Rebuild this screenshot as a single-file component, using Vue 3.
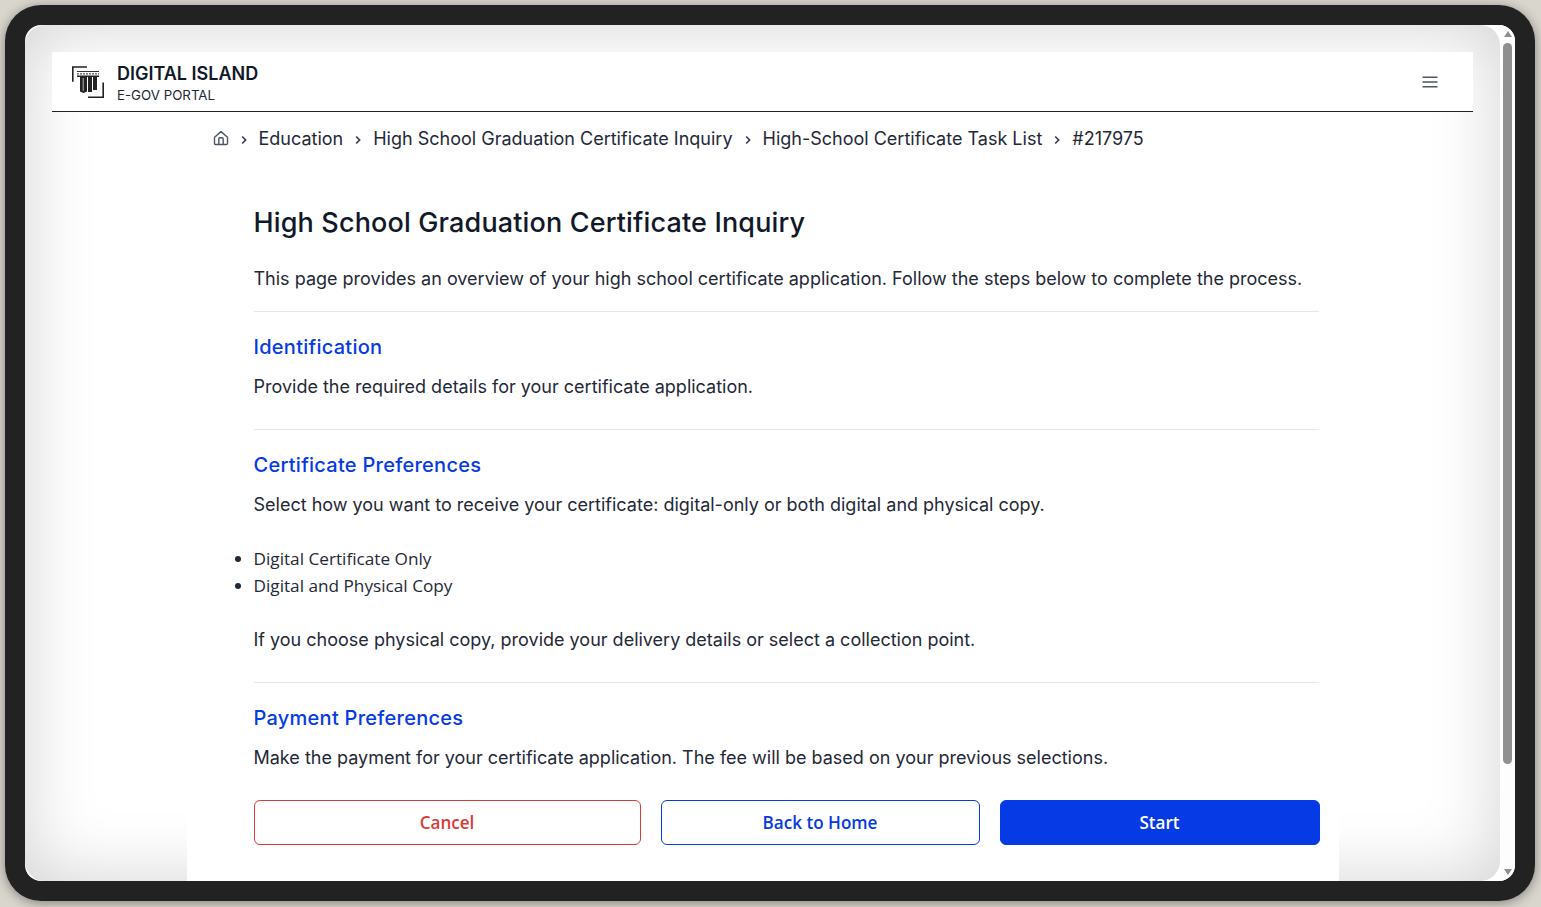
<script setup>
const crumbs = [
  'Education',
  'High School Graduation Certificate Inquiry',
  'High-School Certificate Task List',
  '#217975',
];
</script>

<template>
  <div class="desk">
    <div class="frame">
      <div class="screen">
        <div class="page">
          <header class="topbar">
            <div class="brand">
              <svg class="logo" width="32" height="32" viewBox="0 0 32 32" fill="none">
                <path d="M0.8 15.7V1H15" stroke="#222" stroke-width="1.6" />
                <path d="M31.2 16.5V31.2H16" stroke="#222" stroke-width="1.6" />
                <path d="M5 5.5H27" stroke="#333" stroke-width="1" />
                <path d="M5 7.8H27" stroke="#555" stroke-width="1.2" stroke-dasharray="2 1" />
                <path d="M5 10.2H27" stroke="#222" stroke-width="1.4" />
                <path d="M8 11H15V25.5L11.5 27L8 25.5Z" fill="#222" />
                <path d="M10.6 12H12V25H10.6Z" fill="#888" />
                <path d="M16 11H20V26H16Z" fill="#222" />
                <path d="M21 11H25V24H21Z" fill="#222" />
              </svg>
              <div class="brand-text">
                <div class="brand-name">DIGITAL ISLAND</div>
                <div class="brand-sub">E-GOV PORTAL</div>
              </div>
            </div>
            <svg class="burger" width="16" height="12" viewBox="0 0 16 12">
              <path d="M0.5 1.2H15.5M0.5 6H15.5M0.5 10.8H15.5" stroke="#4b5563" stroke-width="1.6" />
            </svg>
          </header>

          <main class="content">
            <nav class="crumbs">
              <svg class="home" width="16" height="16" viewBox="0 0 16 16" fill="none" stroke="#4b5563" stroke-width="1.4">
                <path d="M1.5 7.2L8 1.6L14.5 7.2V13.2C14.5 14 14 14.5 13.2 14.5H2.8C2 14.5 1.5 14 1.5 13.2Z" stroke-linejoin="round" />
                <path d="M5.8 14.5V9C5.8 8.3 6.3 7.8 7 7.8H9C9.7 7.8 10.2 8.3 10.2 9V14.5" />
              </svg>
              <template v-for="crumb in crumbs" :key="crumb">
                <svg class="chev" width="6" height="10" viewBox="0 0 6 10" fill="none">
                  <path d="M1.2 1.5L4.6 5L1.2 8.5" stroke="#374151" stroke-width="1.7" />
                </svg>
                <span>{{ crumb }}</span>
              </template>
            </nav>

            <div class="body">
              <h1>High School Graduation Certificate Inquiry</h1>
              <p class="intro">This page provides an overview of your high school certificate application. Follow the steps below to complete the process.</p>

              <section class="step">
                <h2>Identification</h2>
                <p>Provide the required details for your certificate application.</p>
              </section>

              <section class="step">
                <h2>Certificate Preferences</h2>
                <p>Select how you want to receive your certificate: digital-only or both digital and physical copy.</p>
                <ul>
                  <li>Digital Certificate Only</li>
                  <li>Digital and Physical Copy</li>
                </ul>
                <p>If you choose physical copy, provide your delivery details or select a collection point.</p>
              </section>

              <section class="step last">
                <h2>Payment Preferences</h2>
                <p>Make the payment for your certificate application. The fee will be based on your previous selections.</p>
              </section>

              <div class="actions">
                <button class="btn cancel">Cancel</button>
                <button class="btn home-btn">Back to Home</button>
                <button class="btn start">Start</button>
              </div>
            </div>
          </main>
        </div>

        <div class="scrollbar">
          <div class="arrow up"></div>
          <div class="track"><div class="thumb"></div></div>
          <div class="arrow down"></div>
        </div>
      </div>
    </div>
  </div>
</template>

<style>
html, body {
  margin: 0;
  background: #d9d6ce;
}
</style>

<style scoped>
.desk {
  width: 1541px;
  height: 907px;
  box-sizing: border-box;
  padding: 5px 6px 6px 5px;
  overflow: hidden;
  background: #d9d6ce;
  font-family: Inter, "Liberation Sans", sans-serif;
  color: #1f2937;
}

.frame {
  height: 100%;
  box-sizing: border-box;
  padding: 20px;
  border-radius: 36px;
  background: #222;
  box-shadow: 0 2px 12px rgba(0, 0, 0, 0.4);
}

.screen {
  height: 100%;
  display: flex;
  overflow: hidden;
  border-radius: 16px;
  background: #fff;
}

.page {
  flex: 1;
  min-width: 0;
  box-sizing: border-box;
  padding: 27px 27px 0;
  border-radius: 20px;
  background: #fff;
  box-shadow: inset 0 0 70px rgba(0, 0, 0, 0.18);
  overflow: hidden;
}

.topbar {
  height: 59px;
  display: flex;
  align-items: center;
  justify-content: space-between;
  padding: 0 35px 0 20px;
  background: #fff;
  border-bottom: 1px solid #222;
}

.brand {
  display: flex;
  align-items: center;
  gap: 13px;
}

.brand-text {
  margin-top: 4px;
}

.brand-name {
  font-size: 18px;
  line-height: 22px;
  font-weight: 600;
  color: #111827;
}

.brand-sub {
  margin-top: 1px;
  font-size: 13.3px;
  line-height: 18px;
  color: #1f2937;
}

.content {
  width: 1152px;
  margin: 0 auto;
  padding-bottom: 60px;
  background: #fff;
}

.crumbs {
  display: flex;
  align-items: center;
  gap: 12px;
  height: 52px;
  padding-left: 26px;
  font-size: 18px;
  color: #1f2937;
}

.chev {
  margin-top: 3px;
}

.body {
  padding: 38px 20px 0 67px;
}

h1 {
  margin: 0;
  font-size: 27px;
  line-height: 42px;
  font-weight: 500;
  letter-spacing: 0.15px;
  color: #111827;
}

p {
  margin: 0;
  font-size: 18px;
  line-height: 27px;
  color: #1f2937;
}

.intro {
  margin-top: 21px;
  padding-bottom: 19px;
  border-bottom: 1px solid #e5e7eb;
}

.step {
  padding: 20px 0 29px;
  border-bottom: 1px solid #e5e7eb;
}

.step.last {
  padding-bottom: 0;
  border-bottom: none;
}

h2 {
  margin: 0 0 11px;
  font-size: 20px;
  line-height: 30px;
  font-weight: 500;
  letter-spacing: 0.26px;
  color: #063ae4;
}

ul {
  margin: 27px 0;
  padding: 0;
  list-style: disc;
  font-family: "Open Sans", "Noto Sans", sans-serif;
  font-size: 17.2px;
  line-height: 27px;
  color: #1f2937;
}

.actions {
  display: grid;
  grid-template-columns: 387px 319px 320px;
  gap: 20px;
  margin-top: 29px;
}

.btn {
  height: 45px;
  border-radius: 6px;
  border: 1px solid;
  background: #fff;
  font-family: "Open Sans", "Noto Sans", sans-serif;
  font-size: 17.1px;
  font-weight: 600;
}

.cancel {
  border-color: #dc3a3a;
  color: #dc3a3a;
}

.home-btn {
  border-color: #063ae4;
  color: #063ae4;
}

.start {
  border-color: #063ae4;
  background: #063ae4;
  color: #fff;
}

.scrollbar {
  width: 15px;
  flex: none;
  display: flex;
  flex-direction: column;
  align-items: center;
  background: #fdfdfd;
}

.arrow {
  width: 0;
  height: 0;
  flex: none;
  border-left: 4.5px solid transparent;
  border-right: 4.5px solid transparent;
}

.arrow.up {
  margin-top: 6px;
  border-bottom: 6px solid #8f8f8f;
}

.arrow.down {
  margin-bottom: 6px;
  border-top: 6px solid #8f8f8f;
}

.track {
  flex: 1;
  width: 9px;
  padding-top: 6px;
}

.thumb {
  height: 721px;
  border-radius: 5px;
  background: #8f8f8f;
}
</style>
